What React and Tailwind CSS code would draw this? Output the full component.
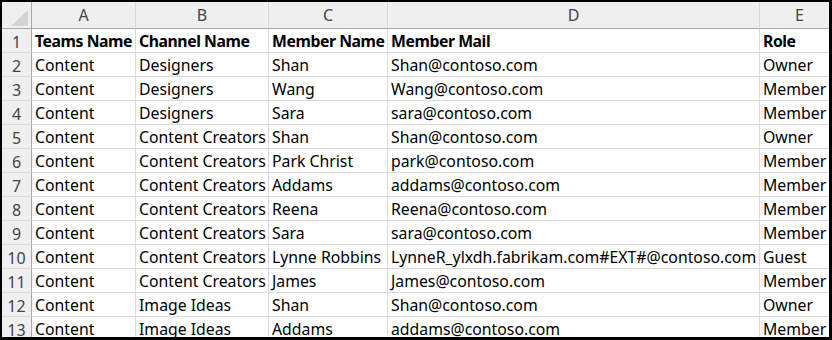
const COLS = ['A', 'B', 'C', 'D', 'E'];

const ROWS = [
  ['Teams Name', 'Channel Name', 'Member Name', 'Member Mail', 'Role'],
  ['Content', 'Designers', 'Shan', 'Shan@contoso.com', 'Owner'],
  ['Content', 'Designers', 'Wang', 'Wang@contoso.com', 'Member'],
  ['Content', 'Designers', 'Sara', 'sara@contoso.com', 'Member'],
  ['Content', 'Content Creators', 'Shan', 'Shan@contoso.com', 'Owner'],
  ['Content', 'Content Creators', 'Park Christ', 'park@contoso.com', 'Member'],
  ['Content', 'Content Creators', 'Addams', 'addams@contoso.com', 'Member'],
  ['Content', 'Content Creators', 'Reena', 'Reena@contoso.com', 'Member'],
  ['Content', 'Content Creators', 'Sara', 'sara@contoso.com', 'Member'],
  ['Content', 'Content Creators', 'Lynne Robbins', 'LynneR_ylxdh.fabrikam.com#EXT#@contoso.com', 'Guest'],
  ['Content', 'Content Creators', 'James', 'James@contoso.com', 'Member'],
  ['Content', 'Image Ideas', 'Shan', 'Shan@contoso.com', 'Owner'],
  ['Content', 'Image Ideas', 'Addams', 'addams@contoso.com', 'Member'],
];

export default function App() {
  return (
    <div className="w-[832px] h-[340px] overflow-hidden bg-white border-t-2 border-l-2 border-r-[3px] border-b-[3px] border-black font-['Noto_Sans',sans-serif]">
      <div className="grid grid-cols-[30px_104px_133px_119px_372px_80px] grid-rows-[27px] auto-rows-[24px]">
        {/* corner */}
        <div className="bg-[#efefef] border-r border-b border-[#a8a8a8] flex items-end justify-end pr-[3px] pb-[2px]">
          <svg width="17" height="16" viewBox="0 0 17 16">
            <polygon points="17,0 17,16 0,16" fill="#d4d4d4" />
          </svg>
        </div>
        {/* column letters */}
        {COLS.map((c) => (
          <div
            key={c}
            className="bg-[#efefef] border-r border-r-[#d8d8d8] border-b border-b-[#a8a8a8] flex items-center justify-center text-[16px] text-[#444] leading-none"
          >
            {c}
          </div>
        ))}

        {ROWS.map((row, i) => (
          <div key={i} className="contents">
            <div className="bg-[#efefef] border-r border-r-[#a8a8a8] border-b border-b-[#d8d8d8] flex items-center justify-center pt-[2px] text-[16px] text-[#444] leading-none">
              {i + 1}
            </div>
            {row.map((cell, j) => (
              <div
                key={j}
                className={`border-r border-b border-[#dadada] pl-[3px] pt-[2px] flex items-center whitespace-nowrap text-[15.8px] leading-none text-black ${
                  i === 0 ? 'font-bold tracking-[-0.45px]' : ''
                }`}
              >
                {cell}
              </div>
            ))}
          </div>
        ))}
      </div>
    </div>
  );
}
